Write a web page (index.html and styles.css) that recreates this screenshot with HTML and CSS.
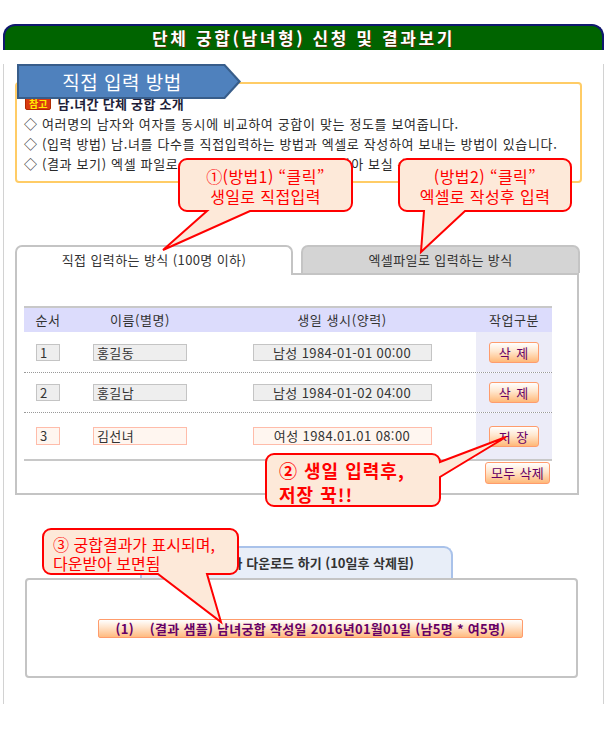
FILE: index.html
```html
<!DOCTYPE html>
<html lang="ko">
<head>
<meta charset="utf-8">
<title>단체 궁합(남녀형) 신청 및 결과보기</title>
<link rel="stylesheet" href="styles.css">
</head>
<body>
<div class="page">
  <div class="head">단체 궁합(남녀형) 신청 및 결과보기</div>
  <div class="frame">
    <div class="label"><div class="label-in">직접 입력 방법</div></div>
    <div class="info">
      <div class="ttl"><span class="badge">참고</span>남.녀간 단체 궁합 소개</div>
      <div>◇ 여러명의 남자와 여자를 동시에 비교하여 궁합이 맞는 정도를 보여줍니다.</div>
      <div>◇ (입력 방법) 남.녀를 다수를 직접입력하는 방법과 엑셀로 작성하여 보내는 방법이 있습니다.</div>
      <div>◇ (결과 보기) 엑셀 파일로 작성된 남녀 궁합 결과표를 받아 보실 수 있습니다.</div>
    </div>

    <div class="tabs">
      <div class="tab on">직접 입력하는 방식 (100명 이하)</div>
      <div class="tab off">엑셀파일로 입력하는 방식</div>
    </div>
    <div class="panel">
      <div class="tbl">
        <div class="thead">
          <div>순서</div><div>이름(별명)</div><div>생일 생시(양력)</div><div>작업구분</div>
        </div>
        <div class="row r1">
          <div class="c"><div class="inp no">1</div></div>
          <div class="c"><div class="inp nm">홍길동</div></div>
          <div class="c"><div class="inp bd">남성 1984-01-01 00:00</div></div>
          <div class="c act"><div class="btn">삭 제</div></div>
        </div>
        <div class="row r2">
          <div class="c"><div class="inp no">2</div></div>
          <div class="c"><div class="inp nm">홍길남</div></div>
          <div class="c"><div class="inp bd">남성 1984-01-02 04:00</div></div>
          <div class="c act"><div class="btn">삭 제</div></div>
        </div>
        <div class="row r3">
          <div class="c"><div class="inp no new">3</div></div>
          <div class="c"><div class="inp nm new">김선녀</div></div>
          <div class="c"><div class="inp bd new">여성 1984.01.01 08:00</div></div>
          <div class="c act"><div class="btn">저 장</div></div>
        </div>
        <div class="tfoot"><div class="btn all">모두 삭제</div></div>
      </div>
    </div>

    <div class="rtab">결과 보기와 다운로드 하기 (10일후 삭제됨)</div>
    <div class="rpanel">
      <div class="bar">(1)&nbsp;&nbsp;&nbsp; (결과 샘플) 남녀궁합 작성일 2016년01월01일 (남5명 * 여5명)</div>
    </div>
  </div>
</div>

<div class="callout co1">
  <svg class="bub" width="175" height="54" viewBox="0 0 175 54"><path d="M9 1H166A8 8 0 0 1 174 9V45A8 8 0 0 1 166 53H72L-15 92L29 53H9A8 8 0 0 1 1 45V9A8 8 0 0 1 9 1Z"/></svg>
  <div class="ctext">①(방법1) “클릭”<br>생일로 직접입력</div>
</div>
<div class="callout co2">
  <svg class="bub" width="174" height="54" viewBox="0 0 174 54"><path d="M9 1H165A8 8 0 0 1 173 9V45A8 8 0 0 1 165 53H67L23 94L26 53H9A8 8 0 0 1 1 45V9A8 8 0 0 1 9 1Z"/></svg>
  <div class="ctext">(방법2) “클릭”<br>엑셀로 작성후 입력</div>
</div>
<div class="callout co3">
  <svg class="bub" width="176" height="54" viewBox="0 0 176 54"><path d="M9 1H167A8 8 0 0 1 175 9L241 -16L175 24V45A8 8 0 0 1 167 53H9A8 8 0 0 1 1 45V9A8 8 0 0 1 9 1Z"/></svg>
  <div class="ctext">② 생일 입력후,<br>저장 꾹!!</div>
</div>
<div class="callout co4">
  <svg class="bub" width="197" height="47" viewBox="0 0 197 47"><path d="M9 1H188A8 8 0 0 1 196 9V38A8 8 0 0 1 188 46H165L179 94L116 46H9A8 8 0 0 1 1 38V9A8 8 0 0 1 9 1Z"/></svg>
  <div class="ctext">③ 궁합결과가 표시되며,<br>다운받아 보면됨</div>
</div>
</body>
</html>
```

FILE: styles.css
```css
html, body {
  margin: 0;
  padding: 0;
  background: #fff;
}
body {
  position: relative;
  width: 612px;
  height: 756px;
  font-family: "Noto Sans CJK KR", "Noto Sans", sans-serif;
  font-size: 13px;
  color: #333;
}
.page {
  margin: 24px 0 0 3px;
  width: 601px;
}
.head {
  box-sizing: border-box;
  height: 26px;
  border: 2px solid #10186e;
  border-bottom: 0;
  border-radius: 12px 12px 0 0;
  background: #006400;
  color: #fff;
  font-weight: bold;
  font-size: 17px;
  line-height: 23px;
  text-align: center;
  letter-spacing: 2.6px;
  text-shadow: 1px 1px 0 #4a2c00;
}
.frame {
  box-sizing: border-box;
  height: 640px;
  border-left: 1px solid #d2d2d2;
  border-right: 1px solid #d2d2d2;
}
.label {
  position: relative;
  z-index: 2;
  box-sizing: border-box;
  margin: 14px 0 -17px 13px;
  width: 224px;
  height: 35px;
  padding: 2px;
  background: #385d8a;
  clip-path: polygon(0 0, 208px 0, 224px 50%, 208px 100%, 0 100%);
}
.label-in {
  height: 100%;
  background: #4f81bd;
  clip-path: polygon(0 0, 205px 0, 219px 50%, 205px 100%, 0 100%);
  color: #fff;
  font-size: 19px;
  line-height: 31px;
  padding-right: 14px;
  text-align: center;
  letter-spacing: 0.5px;
}
.info {
  box-sizing: border-box;
  margin-left: 11px;
  width: 567px;
  border: 2px solid #ffcc66;
  border-radius: 4px;
  padding: 10px 0 7px 7px;
  line-height: 20px;
  color: #2a2a2a;
  letter-spacing: 0.65px;
  white-space: nowrap;
  overflow: hidden;
}
.info .ttl {
  font-weight: bold;
  color: #1e1e3a;
  letter-spacing: 0.3px;
}
.badge {
  display: inline-block;
  background: #d93a10;
  border: 1px solid #b02a00;
  color: #ffee00;
  font-size: 10px;
  font-weight: bold;
  line-height: 11px;
  padding: 0 3px;
  border-radius: 2px;
  margin: 0 6px 0 1px;
  vertical-align: 1px;
  letter-spacing: 0;
}
.tabs {
  display: flex;
  align-items: flex-end;
  gap: 8px;
  margin: 62px 0 0 11px;
  height: 28px;
}
.tab {
  box-sizing: border-box;
  height: 28px;
  border: 2px solid #c4c4c4;
  border-bottom: 0;
  border-radius: 7px 7px 0 0;
  text-align: center;
  line-height: 26px;
  color: #333;
  letter-spacing: 0.4px;
}
.tab.on {
  position: relative;
  z-index: 1;
  width: 278px;
  height: 30px;
  margin-bottom: -2px;
  background: #fff;
}
.tab.off {
  width: 279px;
  background: #d4d4d4;
}
.panel {
  box-sizing: border-box;
  margin-left: 11px;
  width: 564px;
  height: 222px;
  border: 2px solid #c4c4c4;
  padding: 31px 0 0 7px;
}
.tbl {
  width: 528px;
}
.thead, .row {
  display: grid;
  grid-template-columns: 48px 136px 268px 76px;
}
.thead {
  border-top: 2px solid #c8c8c8;
  background: #dcdcfc;
  height: 24px;
  line-height: 24px;
  text-align: center;
  color: #333;
  letter-spacing: 0.6px;
}
.row {
  box-sizing: border-box;
}
.r1 { height: 41px; border-bottom: 1px dotted #999; }
.r2 { height: 40px; border-bottom: 1px dotted #999; }
.r3 { height: 48px; border-bottom: 2px solid #c8c8c8; }
.c {
  display: flex;
  align-items: center;
  justify-content: center;
}
.c.act {
  background: #ececf8;
}
.inp {
  box-sizing: border-box;
  height: 17px;
  border: 1px solid #c4c4c4;
  background: #eeeeee;
  line-height: 15px;
  padding: 0 3px;
  color: #333;
  white-space: nowrap;
  letter-spacing: 0.4px;
}
.inp.no { width: 24px; }
.inp.nm { width: 94px; }
.inp.bd { width: 179px; text-align: center; }
.inp.new {
  height: 18px;
  background: #fff6f0;
  border-color: #ffbcaa;
}
.btn {
  box-sizing: border-box;
  width: 50px;
  height: 21px;
  border: 1px solid #ff9c6c;
  border-radius: 3px;
  background: linear-gradient(#ffffff 0%, #ffe6cc 45%, #ffb878 100%);
  color: #660066;
  text-align: center;
  line-height: 19px;
  letter-spacing: 1px;
}
.tfoot {
  display: flex;
  justify-content: flex-end;
  padding: 1px 2px 0 0;
}
.btn.all {
  width: 65px;
  height: 22px;
  line-height: 20px;
  letter-spacing: 0.3px;
}
.rtab {
  box-sizing: border-box;
  margin: 51px 0 0 136px;
  width: 313px;
  height: 32px;
  border: 2px solid #a9c2ea;
  border-bottom: 0;
  border-radius: 9px 9px 0 0;
  background: #e8eef8;
  text-align: center;
  line-height: 30px;
  font-weight: bold;
  color: #333;
  white-space: nowrap;
}
.rpanel {
  box-sizing: border-box;
  margin-left: 21px;
  width: 553px;
  height: 100px;
  border: 2px solid #c4c4c4;
  border-radius: 4px;
  padding: 39px 0 0 71px;
}
.bar {
  box-sizing: border-box;
  width: 425px;
  height: 19px;
  border: 1px solid #ff9c6c;
  border-radius: 2px;
  background: linear-gradient(#ffffff 0%, #ffe2c8 45%, #ffbb80 100%);
  color: #660066;
  font-weight: bold;
  text-align: center;
  line-height: 17px;
  white-space: nowrap;
  letter-spacing: 0.3px;
}
.callout {
  position: absolute;
  z-index: 5;
}
.bub {
  position: absolute;
  left: 0;
  top: 0;
  overflow: visible;
}
.bub path {
  fill: #fde9d9;
  stroke: #ff0000;
  stroke-width: 2;
  stroke-linejoin: miter;
}
.ctext {
  position: relative;
  color: #ff0000;
  white-space: nowrap;
}
.co1 { left: 178px; top: 158px; width: 175px; height: 54px; }
.co2 { left: 398px; top: 158px; width: 174px; height: 54px; }
.co1 .ctext, .co2 .ctext {
  padding-top: 8px;
  font-size: 16px;
  line-height: 20px;
  text-align: center;
  letter-spacing: 0.4px;
}
.co3 { left: 265px; top: 453px; width: 176px; height: 54px; }
.co3 .ctext {
  padding: 5px 0 0 14px;
  font-size: 18px;
  font-weight: bold;
  line-height: 24px;
  letter-spacing: 1px;
}
.co4 { left: 42px; top: 528px; width: 197px; height: 47px; }
.co4 .ctext {
  padding: 7px 0 0 11px;
  font-size: 16px;
  line-height: 19px;
}
```
